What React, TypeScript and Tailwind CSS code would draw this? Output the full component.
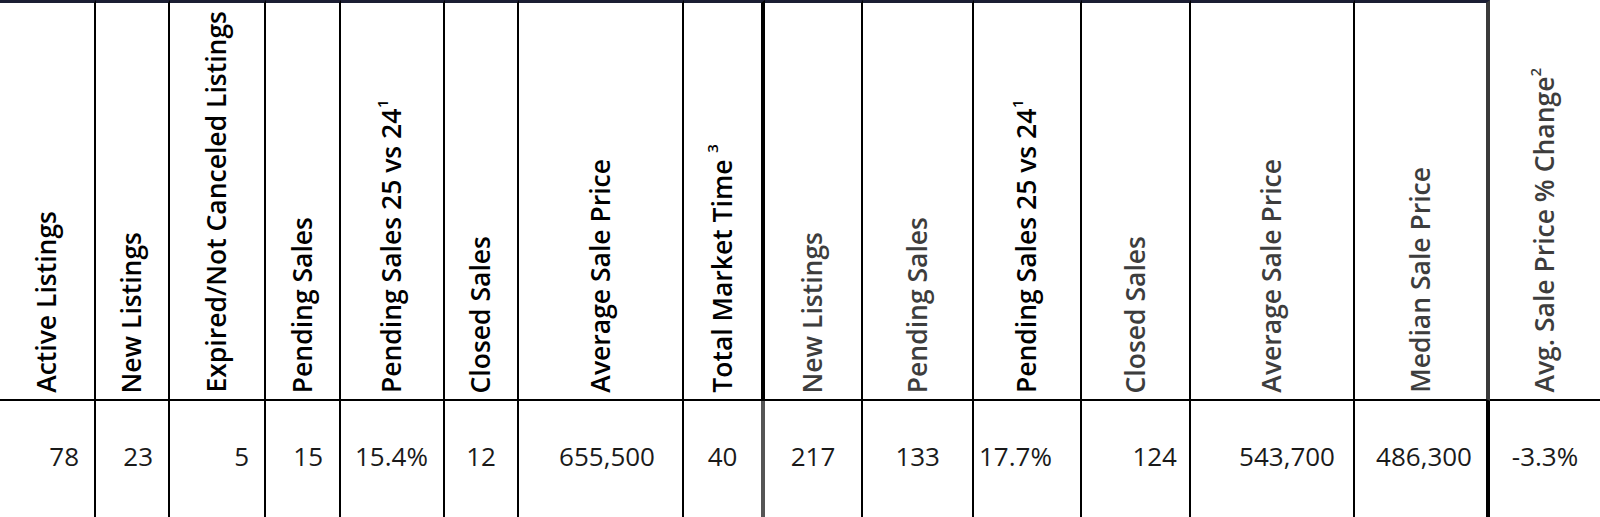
import React from "react";

type Col = {
  label: React.ReactNode;
  value: string;
  width: number;
  dim?: boolean;
  align: "right" | "center" | "left";
  pad?: number;
};

// superscript for the rotated header text: shifted toward the glyph tops
const Sup = ({ n, lift = 9 }: { n: string; lift?: number }) => (
  <span className="relative text-[15px]" style={{ left: lift }}>
    {n}
  </span>
);

const cols: Col[] = [
  { label: "Active Listings", value: "78", width: 96, align: "right", pad: 15 },
  { label: "New Listings", value: "23", width: 74, align: "right", pad: 15 },
  { label: "Expired/Not Canceled Listings", value: "5", width: 96, align: "right", pad: 15 },
  { label: "Pending Sales", value: "15", width: 75, align: "right", pad: 16 },
  {
    label: (
      <>
        Pending Sales 25 vs 24<Sup n="1" />
      </>
    ),
    value: "15.4%",
    width: 104,
    align: "left",
    pad: 14,
  },
  { label: "Closed Sales", value: "12", width: 74, align: "center" },
  { label: "Average Sale Price", value: "655,500", width: 165, align: "right", pad: 27 },
  {
    label: (
      <>
        Total Market Time <Sup n="3" lift={10} />
      </>
    ),
    value: "40",
    width: 81,
    align: "center",
  },
  { label: "New Listings", value: "217", width: 98, dim: true, align: "center" },
  { label: "Pending Sales", value: "133", width: 111, dim: true, align: "right", pad: 32 },
  {
    label: (
      <>
        Pending Sales 25 vs 24<Sup n="1" />
      </>
    ),
    value: "17.7%",
    width: 108,
    align: "left",
    pad: 5,
  },
  { label: "Closed Sales", value: "124", width: 109, dim: true, align: "right", pad: 12 },
  { label: "Average Sale Price", value: "543,700", width: 164, dim: true, align: "right", pad: 18 },
  { label: "Median Sale Price", value: "486,300", width: 135, dim: true, align: "right", pad: 14 },
  {
    label: (
      <>
        Avg. Sale Price % Change<Sup n="2" />
      </>
    ),
    value: "-3.3%",
    width: 110,
    dim: true,
    align: "center",
  },
];

export default function App() {
  return (
    <div className="w-[1600px] h-[517px] overflow-hidden bg-white font-['Open_Sans',sans-serif]">
      <div className="grid grid-cols-[96px_74px_96px_75px_104px_74px_165px_81px_98px_111px_108px_109px_164px_135px_110px]">
        {/* header row */}
        {cols.map((c, i) => {
          const last = i === cols.length - 1;
          const edge =
            i === 7
              ? "border-r-4 border-r-black"
              : i === 13
              ? "border-r-4 border-r-[#3a3a3a]"
              : last
              ? ""
              : "border-r-2 border-r-black";
          return (
            <div
              key={"h" + i}
              className={`h-[401px] flex flex-col justify-end items-center pb-[6px] border-b-2 border-b-black ${
                last ? "" : "border-t-[3px] border-t-[#1b1e33]"
              } ${edge}`}
            >
              <span
                className={`[writing-mode:vertical-rl] rotate-180 whitespace-nowrap text-[26.5px] font-semibold leading-[1.35] ${
                  c.dim ? "text-[#3d3d3d]" : "text-black"
                }`}
              >
                {c.label}
              </span>
            </div>
          );
        })}
        {/* data row */}
        {cols.map((c, i) => {
          const last = i === cols.length - 1;
          const edge =
            i === 7
              ? "border-r-4 border-r-[#555]"
              : i === 13
              ? "border-r-4 border-r-black"
              : last
              ? ""
              : "border-r-2 border-r-black";
          const align =
            c.align === "right"
              ? "justify-end"
              : c.align === "left"
              ? "justify-start"
              : "justify-center";
          return (
            <div
              key={"d" + i}
              className={`h-[116px] flex items-center pb-[6px] ${align} ${edge}`}
              style={
                c.align === "right"
                  ? { paddingRight: c.pad }
                  : c.align === "left"
                  ? { paddingLeft: c.pad }
                  : undefined
              }
            >
              <span className="text-[26px] text-[#1a1a1a]">{c.value}</span>
            </div>
          );
        })}
      </div>
    </div>
  );
}
